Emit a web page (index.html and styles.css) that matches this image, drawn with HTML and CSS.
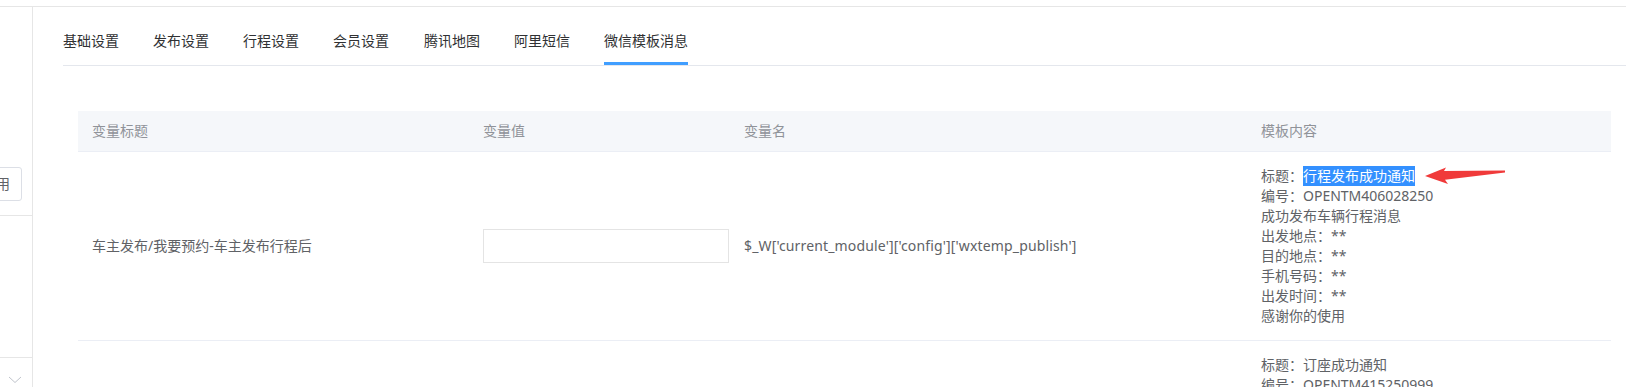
FILE: index.html
```
<!DOCTYPE html>
<html lang="zh-CN">
<head>
    <meta charset="UTF-8">
    <meta name="viewport" content="width=device-width, initial-scale=1.0">
    <title>微信模板消息</title>
    <link rel="stylesheet" href="styles.css">
</head>
<body>
    <div class="topbar"></div>

    <div class="layout">
        <aside class="sidebar">
            <div class="side-top">
                <button class="side-btn">启用</button>
            </div>
            <div class="side-mid"></div>
            <div class="side-foot">
                <svg class="chevron" width="14" height="8" viewBox="0 0 14 8">
                    <polyline points="1,1 7,6.5 13,1" fill="none" stroke="#c0c4cc" stroke-width="1"/>
                </svg>
            </div>
        </aside>

        <main class="main">
            <ul class="tabs">
                <li class="tab">基础设置</li>
                <li class="tab">发布设置</li>
                <li class="tab">行程设置</li>
                <li class="tab">会员设置</li>
                <li class="tab">腾讯地图</li>
                <li class="tab">阿里短信</li>
                <li class="tab active">微信模板消息</li>
            </ul>

            <div class="panel">
                <div class="table">
                    <div class="row head">
                        <div class="cell">变量标题</div>
                        <div class="cell">变量值</div>
                        <div class="cell">变量名</div>
                        <div class="cell">模板内容</div>
                    </div>

                    <div class="row">
                        <div class="cell">车主发布/我要预约-车主发布行程后</div>
                        <div class="cell"><input type="text" class="field"></div>
                        <div class="cell code">$_W['current_module']['config']['wxtemp_publish']</div>
                        <div class="cell tpl">
                            <div>标题：<span class="picked">行程发布成功通知</span><svg class="arrow" width="82" height="20" viewBox="0 0 82 20">
                                    <polygon points="0,10 21,1.5 19,5 80,4.6 80,6.6 20,13.8 23,18" fill="#f03a3a"/>
                                </svg></div>
                            <div>编号：OPENTM406028250</div>
                            <div>成功发布车辆行程消息</div>
                            <div>出发地点：**</div>
                            <div>目的地点：**</div>
                            <div>手机号码：**</div>
                            <div>出发时间：**</div>
                            <div>感谢你的使用</div>
                        </div>
                    </div>

                    <div class="row">
                        <div class="cell">乘客预约-座位预订成功后</div>
                        <div class="cell"><input type="text" class="field"></div>
                        <div class="cell code">$_W['current_module']['config']['wxtemp_booking']</div>
                        <div class="cell tpl">
                            <div>标题：订座成功通知</div>
                            <div>编号：OPENTM415250999</div>
                            <div>您已成功预订座位</div>
                            <div>出发地点：**</div>
                            <div>目的地点：**</div>
                            <div>手机号码：**</div>
                            <div>出发时间：**</div>
                            <div>感谢你的使用</div>
                        </div>
                    </div>
                </div>
            </div>
        </main>
    </div>
</body>
</html>
```

FILE: styles.css
```
html, body {
    margin: 0;
    height: 100%;
    overflow: hidden;
}
body {
    font-family: "Noto Sans", "Noto Sans CJK SC", sans-serif;
    font-size: 14px;
    color: #606266;
    background: #fff;
}
.topbar {
    height: 6px;
    border-bottom: 1px solid #e6e6e6;
}
.layout {
    display: flex;
    height: calc(100% - 7px);
}
.sidebar {
    width: 32px;
    flex-shrink: 0;
    border-right: 1px solid #e6e6e6;
    overflow: hidden;
    display: flex;
    flex-direction: column;
}
.side-top {
    height: 209px;
    border-bottom: 1px solid #e6e6e6;
    box-sizing: border-box;
    padding-top: 160px;
}
.side-btn {
    display: block;
    width: 60px;
    height: 34px;
    margin-left: -38px;
    padding: 0 11px 0 0;
    text-align: right;
    font: inherit;
    line-height: 32px;
    color: #606266;
    background: #fff;
    border: 1px solid #dcdfe6;
    border-radius: 3px;
}
.side-mid {
    height: 141px;
    border-bottom: 1px solid #e6e6e6;
}
.side-foot {
    padding: 18px 0 0 8px;
}
.chevron {
    display: block;
}
.main {
    flex: 1;
    padding-left: 30px;
}
.tabs {
    display: flex;
    list-style: none;
    margin: 14px 0 0;
    padding: 0;
    border-bottom: 1px solid #e4e7ed;
}
.tab {
    position: relative;
    line-height: 40px;
    padding-bottom: 4px;
    margin-right: 34px;
    color: #303133;
}
.tab:nth-child(4) {
    margin-right: 35px;
}
.tab.active::after {
    content: "";
    position: absolute;
    left: 0;
    right: 0;
    bottom: 0;
    height: 3px;
    background: #409eff;
}
.panel {
    padding: 45px 15px 0;
}
.row {
    display: grid;
    grid-template-columns: 391px 261px 517px 1fr;
    border-bottom: 1px solid #ebeef5;
}
.cell {
    display: flex;
    flex-direction: column;
    justify-content: center;
    padding: 14px 14px;
    line-height: 20px;
}
.row .cell:nth-child(2) {
    padding-right: 1px;
}
.code {
    letter-spacing: 0.15px;
}
.head {
    background: #f5f7fa;
    color: #909399;
}
.head .cell {
    padding-top: 10px;
    padding-bottom: 10px;
}
.field {
    width: 246px;
    height: 34px;
    box-sizing: border-box;
    border: 1px solid #e4e4e4;
    border-radius: 0;
    padding: 0 10px;
    font: inherit;
    outline: none;
}
.tpl div {
    white-space: nowrap;
}
.picked {
    display: inline-block;
    line-height: 20px;
    background: #3390ff;
    color: #fff;
}
.arrow {
    vertical-align: top;
    margin-left: 10px;
}
```
